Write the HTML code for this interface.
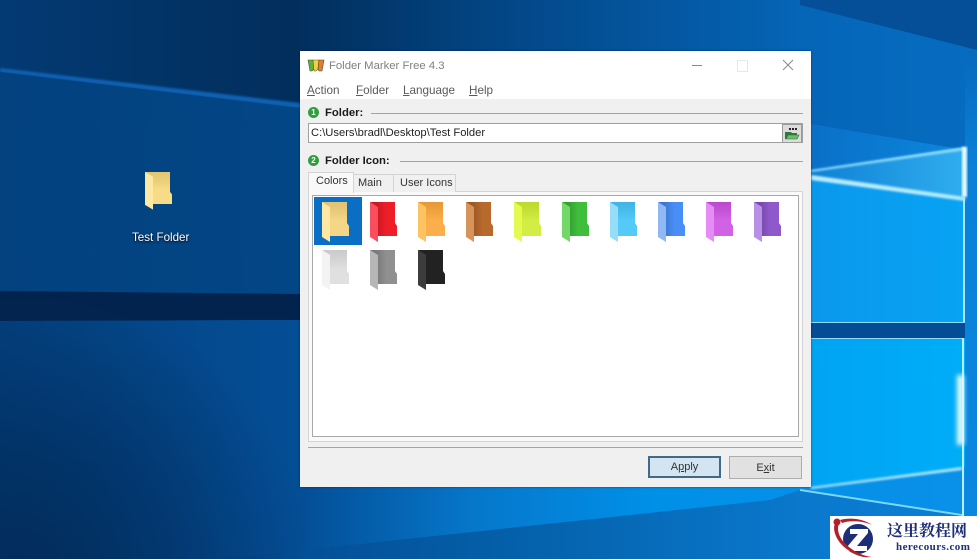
<!DOCTYPE html>
<html><head><meta charset="utf-8"><title>Folder Marker Free</title>
<style>
html,body{margin:0;padding:0;background:#04417f}
body{width:977px;height:559px;position:relative;overflow:hidden;font-family:"Liberation Sans","Noto Sans CJK SC",sans-serif;font-size:12px;color:#222}
#root{position:absolute;left:0;top:0;width:977px;height:559px;filter:blur(.35px)}
.a{position:absolute;white-space:nowrap}
u{text-decoration:underline}
.ln{position:absolute;height:1px;background:#a4a4a4}
.num{position:absolute;width:11px;height:11px;border-radius:50%;background:#2f9e3f;color:#fff;font:bold 8px/11px "Liberation Sans",sans-serif;text-align:center}
.b{font-weight:bold;color:#1a1a1a}
.menu{color:#5a5a5a;top:84px;line-height:14px;font-size:11.7px}
.tab{line-height:14px;font-size:11px;color:#333}
</style></head><body><div id="root">
<svg class="a" style="left:0;top:0" width="977" height="559" viewBox="0 0 977 559">
<defs>
<linearGradient id="g1" gradientUnits="userSpaceOnUse" x1="0" x2="977" y1="0" y2="0"><stop offset="0" stop-color="#03417f"/><stop offset=".31" stop-color="#034686"/><stop offset=".6" stop-color="#0566b6"/><stop offset=".83" stop-color="#0a98ec"/><stop offset="1" stop-color="#08a4f4"/></linearGradient>
<linearGradient id="g2" gradientUnits="userSpaceOnUse" x1="0" x2="977" y1="0" y2="0"><stop offset="0" stop-color="#03417f"/><stop offset=".31" stop-color="#044e96"/><stop offset=".6" stop-color="#0670c0"/><stop offset=".83" stop-color="#00a4f2"/><stop offset="1" stop-color="#00aef8"/></linearGradient>
<linearGradient id="g3" gradientUnits="userSpaceOnUse" x1="0" x2="977" y1="0" y2="0"><stop offset="0" stop-color="#033a73"/><stop offset=".3" stop-color="#022e5c"/><stop offset=".55" stop-color="#034a8c"/><stop offset=".83" stop-color="#0566b8"/><stop offset="1" stop-color="#066cc0"/></linearGradient>
<linearGradient id="g5" gradientUnits="userSpaceOnUse" x1="0" x2="977" y1="0" y2="0"><stop offset="0" stop-color="#03417f"/><stop offset=".31" stop-color="#044e96"/><stop offset=".49" stop-color="#0678cc"/><stop offset=".67" stop-color="#0090e8"/><stop offset="1" stop-color="#0a90e8"/></linearGradient>
<linearGradient id="g6" gradientUnits="userSpaceOnUse" x1="0" x2="977" y1="0" y2="0"><stop offset="0" stop-color="#032f60"/><stop offset=".3" stop-color="#044e96"/><stop offset=".51" stop-color="#045fa8"/><stop offset=".82" stop-color="#0a78cc"/><stop offset="1" stop-color="#0a80d8"/></linearGradient>
<linearGradient id="g7" gradientUnits="userSpaceOnUse" x1="811" x2="965" y1="0" y2="0"><stop offset="0" stop-color="#0e80d4"/><stop offset="1" stop-color="#30aef0"/></linearGradient>
<linearGradient id="g8" gradientUnits="userSpaceOnUse" x1="811" x2="965" y1="0" y2="0"><stop offset="0" stop-color="#0a70c8"/><stop offset="1" stop-color="#0c86dc"/></linearGradient>
<linearGradient id="g9" gradientUnits="userSpaceOnUse" x1="0" x2="0" y1="0" y2="559"><stop offset="0" stop-color="#0560b0"/><stop offset=".3" stop-color="#0a80d8"/><stop offset="1" stop-color="#0a88e0"/></linearGradient>
<radialGradient id="g10" gradientUnits="userSpaceOnUse" cx="20" cy="575" r="290"><stop offset="0" stop-color="#022a58" stop-opacity=".95"/><stop offset=".5" stop-color="#022a58" stop-opacity=".55"/><stop offset="1" stop-color="#022a58" stop-opacity="0"/></radialGradient>
<filter id="bl" x="-20%" y="-100%" width="140%" height="300%"><feGaussianBlur stdDeviation="1"/></filter>
<filter id="bl2" x="-300%" y="-20%" width="700%" height="140%"><feGaussianBlur stdDeviation="2.5"/></filter>
</defs>
<rect width="977" height="559" fill="url(#g2)"/>
<polygon points="0,0 977,0 977,160 811,125 811,170 300,105 0,70" fill="url(#g3)"/>
<polygon points="800,5 977,50 977,0 800,0" fill="#044f98"/>
<polygon points="811,124 977,152 965,148 811,170" fill="url(#g8)"/>
<polygon points="0,68 300,103 811,165 811,172 300,108 0,72" fill="#0d62b4" filter="url(#bl)"/>
<polygon points="811,170 965,147 965,198 811,177" fill="url(#g7)"/>
<polygon points="0,72 300,108 811,177 965,198 965,323 811,323 300,294 0,291" fill="url(#g1)"/>
<polygon points="0,291 300,294 811,323 965,323 965,338 811,338 300,320 0,321" fill="#02234e"/>
<polygon points="811,323 965,323 965,338 811,338" fill="#044d96"/>
<polygon points="965,50 977,53 977,559 965,559" fill="url(#g9)"/>
<polygon points="0,321 300,320 811,338 965,338 965,467 811,487 0,487" fill="url(#g2)"/>
<polygon points="0,487 811,487 965,467 965,559 0,559" fill="url(#g5)"/>
<polygon points="220,559 770,500 800,490 965,516 977,518 977,559" fill="url(#g6)"/>
<rect x="0" y="280" width="330" height="279" fill="url(#g10)"/>
<polygon points="811,170 965,147 966,150 811,172" fill="#8fdcfa" filter="url(#bl)"/>
<polygon points="811,175 965,197 965,201 811,180" fill="#b8ecfd" filter="url(#bl)"/>
<rect x="962" y="147" width="5" height="50" fill="#e8faff" filter="url(#bl)"/>
<rect x="963" y="198" width="2" height="125" fill="#a8e8fd"/>
<rect x="811" y="322" width="154" height="1" fill="#90dcfa"/>
<rect x="811" y="338" width="153" height="1" fill="#90dcfa"/>
<rect x="962" y="338" width="2" height="180" fill="#b8eefd"/>
<rect x="957" y="375" width="7" height="70" fill="#e8faff" filter="url(#bl2)"/>
<polygon points="811,487 962,467 962,470 811,489" fill="#b0ecfd" filter="url(#bl)"/>
<polygon points="800,489 962,514 962,516 800,491" fill="#7cd8fa"/>
<defs>
<path id="b" d="M0 0H25V21L27 24V34H8V6Z"/>
<path id="f" d="M0 0L8 5V40L0 35Z"/>
<linearGradient id="sh" x1="0" x2="1" y1="0" y2="0"><stop offset=".25" stop-color="#000" stop-opacity=".16"/><stop offset=".6" stop-color="#000" stop-opacity="0"/></linearGradient>
<linearGradient id="hl" x1="0" x2="0" y1="0" y2="1"><stop offset="0" stop-color="#000" stop-opacity=".08"/><stop offset=".55" stop-color="#fff" stop-opacity=".1"/></linearGradient>
</defs>
<g transform="translate(145,172) scale(1,.94)"><use href="#b" fill="#f6d778"/><use href="#b" fill="url(#hl)"/><use href="#f" fill="#fde9a4"/></g>
</svg>
<div class="a" style="left:132px;top:231px;color:#fff;line-height:14px;font-size:11.6px;text-shadow:0 1px 2px #000">Test Folder</div>

<!-- window -->
<div class="a" style="left:300px;top:51px;width:511px;height:436px;background:#f0f0f0;box-shadow:0 0 2px rgba(0,20,50,.6)">
<div class="a" style="left:0;top:0;width:511px;height:48px;background:#fff"></div>
</div>
<svg class="a" style="left:307px;top:58px" width="18" height="15" viewBox="0 0 18 15">
<path d="M1 2H6L7 11L5 13H3Z" fill="#5fae3c" stroke="#4a5a2a" stroke-width=".6"/>
<path d="M6 2H12L11 11L9 13H7Z" fill="#f2d040" stroke="#6a5a20" stroke-width=".6"/>
<path d="M12 2H17L15 13H12L11 11Z" fill="#d8803a" stroke="#6a4020" stroke-width=".6"/>
</svg>
<div class="a" style="left:329px;top:59px;color:#808080;font-size:11.3px;line-height:14px">Folder Marker Free 4.3</div>
<div class="a" style="left:692px;top:65px;width:10px;height:1px;background:#8a8a8a"></div>
<div class="a" style="left:737px;top:60px;width:9px;height:10px;border:1px solid #e8e8e8"></div>
<svg class="a" style="left:782px;top:59px" width="12" height="12"><path d="M1 1L11 11M11 1L1 11" stroke="#8a8a8a" stroke-width="1" fill="none"/></svg>

<div class="a menu" style="left:307px"><u>A</u>ction</div>
<div class="a menu" style="left:356px"><u>F</u>older</div>
<div class="a menu" style="left:403px"><u>L</u>anguage</div>
<div class="a menu" style="left:469px"><u>H</u>elp</div>

<div class="num" style="left:308px;top:107px">1</div>
<div class="a b" style="left:325px;top:106px;line-height:14px;font-size:11.3px">Folder:</div>
<div class="ln" style="left:371px;top:113px;width:432px"></div>
<div class="a" style="left:308px;top:123px;width:493px;height:18px;background:#fff;border:1px solid #a0a0a0"></div>
<div class="a" style="left:311px;top:126px;line-height:14px;font-size:11.2px;color:#222">C:\Users\bradl\Desktop\Test Folder</div>
<div class="a" style="left:782px;top:124px;width:18px;height:17px;background:#dcdcdc;border:1px solid #9a9a9a"></div>
<svg class="a" style="left:783px;top:125px" width="18" height="16" viewBox="0 0 18 16">
<path d="M6 3h2v2H6zM9 3h2v2H9zM12 3h2v2h-2z" fill="#222"/>
<path d="M2 7H8L9 8H14V10H5L3 14H2Z" fill="#2f7a3f"/>
<path d="M5 10H16L14 14H3Z" fill="#6cbf6a" stroke="#2f6a3f" stroke-width=".6"/>
</svg>

<div class="num" style="left:308px;top:155px">2</div>
<div class="a b" style="left:325px;top:154px;line-height:14px;font-size:11.3px">Folder Icon:</div>
<div class="ln" style="left:400px;top:161px;width:403px"></div>

<!-- tab panel -->
<div class="a" style="left:308px;top:191px;width:493px;height:249px;background:#f9f9f9;border:1px solid #d4d4d4"></div>
<div class="a" style="left:353px;top:174px;width:39px;height:17px;background:#f0f0f0;border:1px solid #d4d4d4;border-bottom:0"></div>
<div class="a" style="left:393px;top:174px;width:61px;height:17px;background:#f0f0f0;border:1px solid #d4d4d4;border-bottom:0"></div>
<div class="a" style="left:308px;top:172px;width:44px;height:20px;background:#f9f9f9;border:1px solid #d4d4d4;border-bottom:0"></div>
<div class="a tab" style="left:316px;top:174px">Colors</div>
<div class="a tab" style="left:358px;top:176px">Main</div>
<div class="a tab" style="left:400px;top:176px">User Icons</div>
<div class="a" style="left:312px;top:195px;width:485px;height:240px;background:#fff;border:1px solid #a8a8a8"></div>
<div class="a" style="left:314px;top:197px;width:48px;height:48px;background:#0a6fc4"></div>

<svg class="a" style="left:314px;top:197px" width="480" height="100" viewBox="314 197 480 100">
<g transform="translate(322,202)"><use href="#b" fill="#f4d27a"/><use href="#b" fill="url(#hl)"/><use href="#f" fill="#fde7a2"/></g>
<g transform="translate(370,202)"><use href="#b" fill="#ee1e28"/><use href="#b" fill="url(#sh)"/><use href="#f" fill="#f84e5e"/></g>
<g transform="translate(418,202)"><use href="#b" fill="#fba638"/><use href="#b" fill="url(#hl)"/><use href="#f" fill="#fdc262"/></g>
<g transform="translate(466,202)"><use href="#b" fill="#b8692c"/><use href="#b" fill="url(#sh)"/><use href="#f" fill="#d8935a"/></g>
<g transform="translate(514,202)"><use href="#b" fill="#cdec30"/><use href="#b" fill="url(#hl)"/><use href="#f" fill="#e4fa50"/></g>
<g transform="translate(562,202)"><use href="#b" fill="#3fbe3c"/><use href="#b" fill="url(#sh)"/><use href="#f" fill="#72d868"/></g>
<g transform="translate(610,202)"><use href="#b" fill="#42c4f8"/><use href="#b" fill="url(#hl)"/><use href="#f" fill="#95ddf8"/></g>
<g transform="translate(658,202)"><use href="#b" fill="#488ef6"/><use href="#b" fill="url(#sh)"/><use href="#f" fill="#90b8f4"/></g>
<g transform="translate(706,202)"><use href="#b" fill="#cc50e2"/><use href="#b" fill="url(#hl)"/><use href="#f" fill="#e68cf6"/></g>
<g transform="translate(754,202)"><use href="#b" fill="#8f58cc"/><use href="#b" fill="url(#sh)"/><use href="#f" fill="#b890e8"/></g>
<g transform="translate(322,250)"><use href="#b" fill="#dcdcdc"/><use href="#b" fill="url(#hl)"/><use href="#f" fill="#f3f3f3"/></g>
<g transform="translate(370,250)"><use href="#b" fill="#909090"/><use href="#b" fill="url(#sh)"/><use href="#f" fill="#b6b6b6"/></g>
<g transform="translate(418,250)"><use href="#b" fill="#222"/><use href="#f" fill="#3c3c3c"/></g>
</svg>

<div class="ln" style="left:308px;top:447px;width:495px"></div>
<div class="a" style="left:648px;top:456px;width:69px;height:18px;background:#d2e5f1;border:2px solid #3f6a8a;text-align:center;line-height:19px;font-size:11px;color:#333">A<u>p</u>ply</div>
<div class="a" style="left:729px;top:456px;width:71px;height:21px;background:#e1e1e1;border:1px solid #adadad;text-align:center;line-height:22px;font-size:11px;color:#333">E<u>x</u>it</div>

<!-- watermark -->
<div class="a" style="left:830px;top:516px;width:147px;height:43px;background:#fff"></div>
<svg class="a" style="left:830px;top:516px" width="58" height="43" viewBox="0 0 58 43">
<circle cx="28" cy="23" r="15" fill="#1c2f78"/>
<path d="M20 13H38V17L27 30H37V35H17V31L28 18H20Z" fill="#fff"/>
<path d="M6 6C1 12 6 26 18 34C26 40 34 42 42 41C32 40 20 34 12 24C8 18 7 12 9 8Z" fill="#b3202a"/>
<circle cx="7" cy="6" r="3.5" fill="#b3202a"/>
<path d="M10 4C20 1 34 3 42 9C34 5 20 4 12 7Z" fill="#b3202a"/>
</svg>
<div class="a" style="left:887px;top:520px;font:bold 16px/19px 'Noto Serif CJK SC','Liberation Serif',serif;color:#1c2f78">这里教程网</div>
<div class="a" style="left:896px;top:541px;font:bold 11px/13px 'Liberation Serif',serif;color:#1c2f78;letter-spacing:.45px">herecours.com</div>
</div></body></html>
